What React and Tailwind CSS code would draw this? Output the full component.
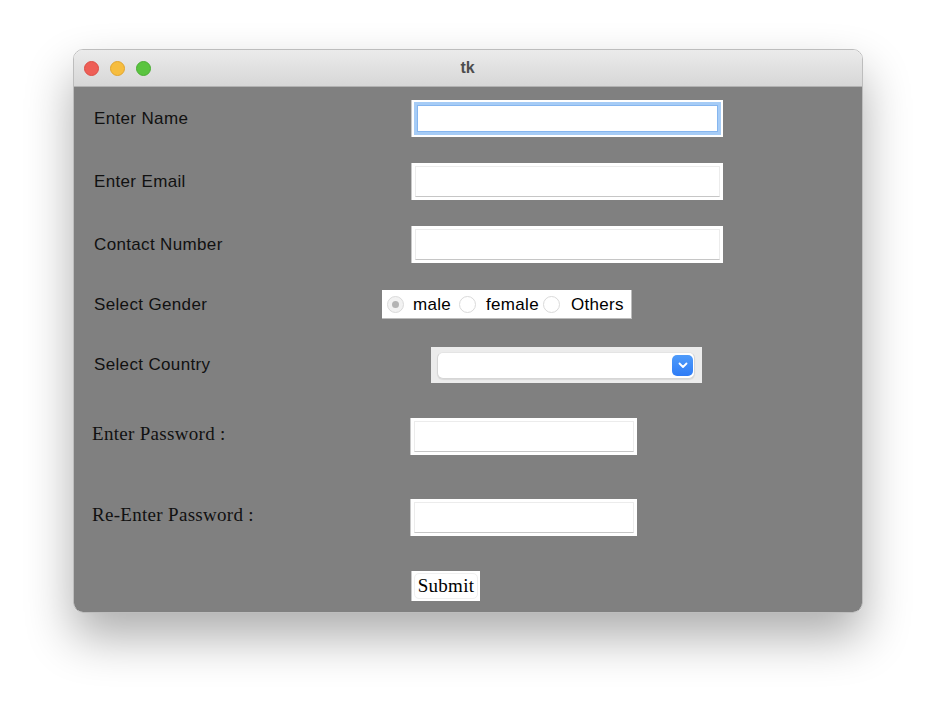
import React from "react";

const sans = "font-['Liberation_Sans',Arial,sans-serif]";
const serif = "font-['Liberation_Serif','Times_New_Roman',serif]";

function Field({ width, focused }) {
  return (
    <div className={`${width} h-[37px] bg-white border-l border-[#c8c8c8] flex`}>
      {focused ? (
        <div className="flex-1 m-[2px] border-[3px] border-[#a6ccf6]">
          <div className="w-full h-full border border-[#86b6ef] bg-white" />
        </div>
      ) : (
        <div className="flex-1 m-[3px] border border-[#ececec] border-b-[#c6c6c6] bg-white" />
      )}
    </div>
  );
}

function Radio({ checked }) {
  return (
    <span
      className={`w-[17px] h-[17px] rounded-full border border-[#dadada] flex items-center justify-center shrink-0 ${
        checked ? "bg-[#f2f2f2]" : "bg-white"
      }`}
    >
      {checked && <span className="w-[7px] h-[7px] rounded-full bg-[#b4b4b4]" />}
    </span>
  );
}

function Label({ children, font = sans }) {
  return (
    <div
      className={`w-[289px] shrink-0 text-[#111] ${font} ${
        font === sans ? "text-[17px] tracking-[0.35px] pl-[1px]" : "text-[19px] tracking-[0.3px] -mt-[4px] -ml-[1px]"
      }`}
    >
      {children}
    </div>
  );
}

export default function App() {
  return (
    <div className="w-[936px] h-[710px] bg-white pt-[49px] pl-[73px]">
      <div className="w-[790px] h-[564px] rounded-[10px] overflow-hidden border border-[#bdbdbd] shadow-[0_24px_48px_rgba(0,0,0,0.32)] flex flex-col">
        {/* title bar */}
        <div className="h-[37px] shrink-0 bg-gradient-to-b from-[#ebebeb] to-[#d7d7d7] border-b border-[#b2b2b2] flex items-center">
          <div className="flex items-center gap-[11px] pl-[10px]">
            <span className="w-[15px] h-[15px] rounded-full bg-[#ee5f57] border border-[#dd4d45]" />
            <span className="w-[15px] h-[15px] rounded-full bg-[#f6bd3f] border border-[#e1a52e]" />
            <span className="w-[15px] h-[15px] rounded-full bg-[#5ac43f] border border-[#4aae33]" />
          </div>
          <div className={`flex-1 text-center pr-[78px] text-[16px] font-bold text-[#4d4d4d] ${sans}`}>tk</div>
        </div>

        {/* body */}
        <div className="flex-1 bg-[#808080] pl-[19px] pt-[13px] flex flex-col">
          <div className="flex items-center h-[37px]">
            <Label>Enter Name</Label>
            <div className="ml-[29px]">
              <Field width="w-[312px]" focused />
            </div>
          </div>

          <div className="flex items-center h-[37px] mt-[26px]">
            <Label>Enter Email</Label>
            <div className="ml-[29px]">
              <Field width="w-[312px]" />
            </div>
          </div>

          <div className="flex items-center h-[37px] mt-[26px]">
            <Label>Contact Number</Label>
            <div className="ml-[29px]">
              <Field width="w-[312px]" />
            </div>
          </div>

          <div className="flex items-center h-[29px] mt-[27px]">
            <Label>Select Gender</Label>
            <div className={`w-[250px] h-[29px] bg-white border-b border-r border-[#bcbcbc] flex items-center pl-[5px] text-[17px] tracking-[0.3px] text-black ${sans}`}>
              <Radio checked />
              <span className="ml-[9px] pt-[2px]">male</span>
              <span className="ml-[8px]"><Radio /></span>
              <span className="ml-[10px] pt-[2px]">female</span>
              <span className="ml-[4px]"><Radio /></span>
              <span className="ml-[11px] pt-[2px]">Others</span>
            </div>
          </div>

          <div className="flex items-center h-[36px] mt-[28px]">
            <Label>Select Country</Label>
            <div className="ml-[49px] w-[271px] h-[36px] bg-[#ececec] flex items-center pl-[6px] pr-[7px]">
              <div className="flex-1 h-[27px] bg-white rounded-[6px] border border-[#d6d6d6] border-t-[#e4e4e4] shadow-[0_1px_1px_rgba(0,0,0,0.08)] flex items-center justify-end pr-[1px]">
                <div className="w-[21px] h-[21px] rounded-[5px] bg-gradient-to-b from-[#4f9bfa] to-[#2f7cf6] flex items-center justify-center">
                  <svg width="10" height="7" viewBox="0 0 10 7" fill="none">
                    <polyline points="1.5,1.5 5,5 8.5,1.5" stroke="white" strokeWidth="1.8" strokeLinecap="round" strokeLinejoin="round" />
                  </svg>
                </div>
              </div>
            </div>
          </div>

          <div className="flex items-center h-[37px] mt-[35px]">
            <Label font={serif}>Enter Password :</Label>
            <div className="ml-[29px]">
              <Field width="w-[227px]" />
            </div>
          </div>

          <div className="flex items-center h-[37px] mt-[44px]">
            <Label font={serif}>Re-Enter Password :</Label>
            <div className="ml-[29px]">
              <Field width="w-[227px]" />
            </div>
          </div>

          <div className="flex items-center h-[30px] mt-[35px]">
            <div className="w-[289px] shrink-0" />
            <div className="ml-[29px] w-[69px] h-[30px] bg-white border-l border-[#c8c8c8] p-[2px]">
              <div className={`w-full h-full rounded-[5px] border border-[#f0f0f0] flex items-center justify-center text-[19px] tracking-[0.3px] text-black ${serif}`}>
                Submit
              </div>
            </div>
          </div>
        </div>
      </div>
    </div>
  );
}
